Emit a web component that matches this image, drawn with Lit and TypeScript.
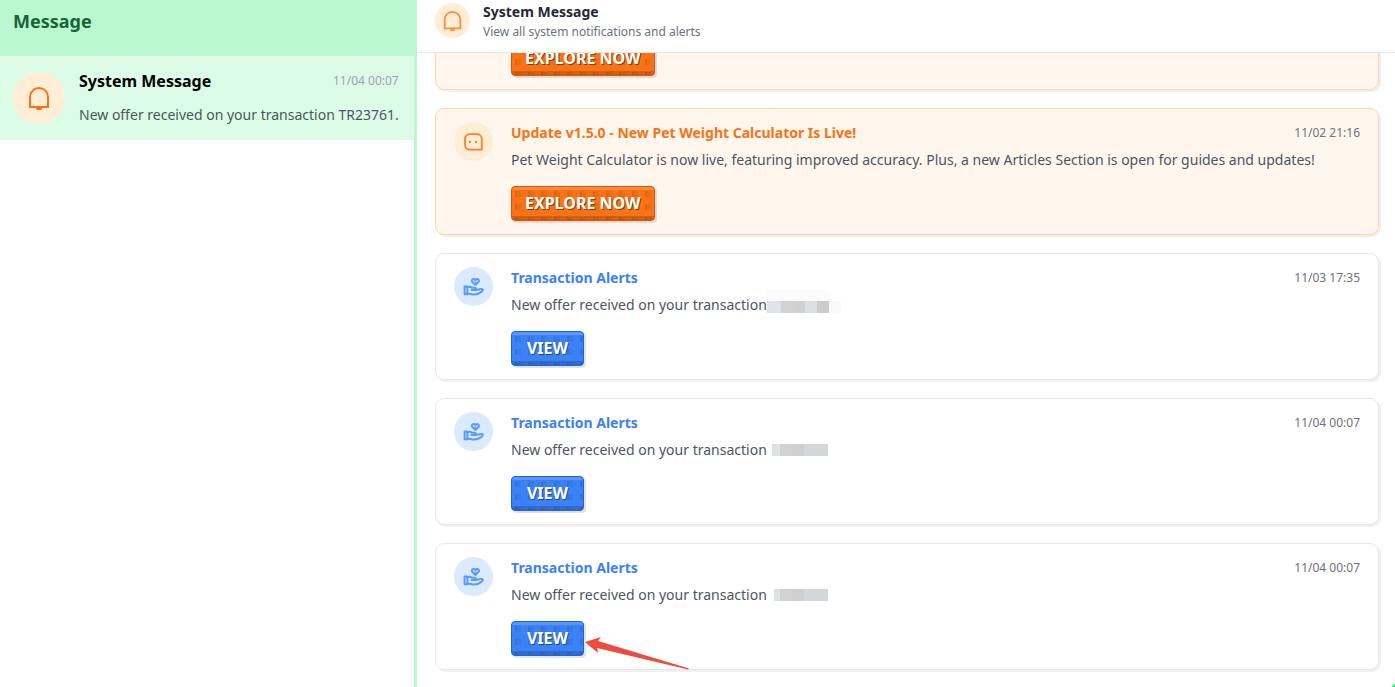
import { LitElement, html, css, svg, nothing } from "lit";
import { customElement, property } from "lit/decorators.js";

interface Notice {
  kind: "update" | "offer";
  title: string;
  text: string;
  time: string;
  action: string;
  mask?: "shaded" | "plain" | "short";
  arrow?: boolean;
}

const update: Notice = {
  kind: "update",
  title: "Update v1.5.0 - New Pet Weight Calculator Is Live!",
  text: "Pet Weight Calculator is now live, featuring improved accuracy. Plus, a new Articles Section is open for guides and updates!",
  time: "11/02 21:16",
  action: "EXPLORE NOW",
};

const offer = (time: string, mask: Notice["mask"], arrow = false): Notice => ({
  kind: "offer",
  title: "Transaction Alerts",
  text: "New offer received on your transaction",
  time,
  action: "VIEW",
  mask,
  arrow,
});

const notices: Notice[] = [
  update,
  update,
  offer("11/03 17:35", "shaded"),
  offer("11/04 00:07", "plain"),
  offer("11/04 00:07", "short", true),
];

const bell = (size: number) => html`<svg viewBox="0 0 24 24" width=${size} height=${size} aria-hidden="true">
  <path d="M3 21V11A9 9 0 0 1 21 11V21Z" fill="none" stroke="currentColor" stroke-width="2" stroke-linejoin="miter"/>
  <path d="M9 22H15A3 2.4 0 0 1 9 22Z" fill="currentColor"/>
</svg>`;

const bot = html`<svg viewBox="0 0 19 18" width="19" height="18" aria-hidden="true">
  <path d="M5.6 1.2H13.2A4.6 4.6 0 0 1 17.8 5.8V16.6H5.6A4.6 4.6 0 0 1 1 12V5.8A4.6 4.6 0 0 1 5.6 1.2Z" fill="none" stroke="currentColor" stroke-width="1.8"/>
  <path d="M5 8h2v2H5zM11 8h2v2h-2z" fill="currentColor"/>
</svg>`;

const hand = html`<svg viewBox="0 0 22 20" width="22" height="20" aria-hidden="true">
  <g fill="none" stroke="currentColor" stroke-width="2" stroke-linejoin="round" stroke-linecap="round">
    <path d="M1.6 9.4H4.4V17.2H1.6Z"/>
    <path d="M4.4 10.2C6 9.4 7.6 9.6 9 10.8H11.6C13.4 10.8 13.4 13 11.6 13H8.6M13 13L18 12C20.4 11.6 20.4 13.6 18.8 14.6C16.4 16.4 14 17.6 11 17.6C8.6 17.6 7.2 16.6 4.4 16.4"/>
    <path d="M12.4 8L9.2 4.8C7.8 2.8 10.6 .8 12.4 3C14.2 .8 17 2.8 15.6 4.8Z"/>
  </g>
  <path d="M12.4 6.4L11 4.6H13.8Z" fill="currentColor"/>
</svg>`;

@customElement("notice-card")
export class NoticeCard extends LitElement {
  @property({ attribute: false }) notice!: Notice;

  static styles = css`
    :host { display: block; flex: none; position: relative; }
    .card {
      display: flex; gap: 18px; padding: 13px 18px; box-sizing: border-box;
      border: 1px solid #e5e7eb; border-radius: 9px; background: #fff;
      box-shadow: 2px 2px 0 #f0f0f0;
    }
    .update { background: #fff7ed; border-color: #fed7aa; }
    .icon {
      flex: none; width: 39px; height: 39px; border-radius: 50%;
      display: grid; place-items: center; background: #dbeafe; color: #5a9bfa;
    }
    .update .icon { background: #ffedd5; color: #fb8226; }
    .body { flex: 1; min-width: 0; }
    .top { display: flex; justify-content: space-between; align-items: center; line-height: 22px; }
    h3 { margin: 0; font-size: 14px; font-weight: 700; color: #3b82f6; }
    .update h3 { color: #f97316; }
    time { font-size: 12px; color: #6b7280; }
    p { margin: 0 0 13px; padding-top: 3px; display: flex; font-size: 14px; line-height: 26px; color: #4b5563; }
    .mask { display: flex; align-self: center; height: 12px; margin-left: 5px; }
    .mask i { width: 12px; background: #d3d7da; }
    .mask i:nth-child(1) { width: 8px; background: #dde3e5; }
    .mask i:nth-child(2) { background: #d2d2d4; }
    .mask i:nth-child(3) { background: #cfcfd1; }
    .short { margin-left: 7px; }
    .short i:nth-child(1) { width: 6px; }
    .shaded { margin-left: 0; align-self: flex-end; margin-bottom: 5px; box-shadow: 0 -12px 0 #fbfbfb, 12px 0 0 #f8f9fc; }
    .shaded i:nth-child(1) { width: 14px; background: #e0e3e9; }
    .shaded i:nth-child(4) { background: #dbdfe3; }
    .shaded i:nth-child(5) { background: #cbcbcd; }
    button {
      display: block; height: 35px; min-width: 73px; padding: 0 13px; border: 1px solid #1d62e0; border-radius: 4px;
      color: #fff; font: 700 16px/33px "Noto Sans", sans-serif;
      text-shadow: 1px 1px 0 rgb(0 0 0 / 45%);
      background:
        linear-gradient(rgb(255 255 255 / 17%) 3px, transparent 3px, transparent 29px, rgb(0 0 0 / 16%) 29px),
        conic-gradient(from 270deg at 2px 6px, rgb(0 0 0 / 6%) 25%, transparent 0) 3px 4px / 13px 13px,
        conic-gradient(from 270deg at 6px 6px, rgb(0 0 0 / 6%) 25%, transparent 0) 3px 4px / 13px 13px,
        #3b82f6;
      box-shadow: 2px 2px 0 rgb(0 0 0 / 11%);
    }
    .update button { background-color: #f97316; border-color: #dc520c; }
    .arrow { position: absolute; left: 150px; top: 93px; }
  `;

  render() {
    const n = this.notice;
    return html`<article class="card ${n.kind}">
        <span class="icon">${n.kind === "update" ? bot : hand}</span>
        <div class="body">
          <div class="top"><h3>${n.title}</h3><time>${n.time}</time></div>
          <p>${n.text}${n.mask
            ? html`<span class="mask ${n.mask}"><i></i><i></i><i></i><i></i><i></i></span>`
            : nothing}</p>
          <button type="button">${n.action}</button>
        </div>
      </article>
      ${n.arrow
        ? html`<svg class="arrow" width="106" height="34" viewBox="0 0 106 34" aria-hidden="true">
            ${svg`<path d="M0 6L16 1L13 5L104 32.5L103 33.5L12 12L13 17Z" fill="#f04a3e"/>`}
          </svg>`
        : nothing}`;
  }
}

@customElement("app-root")
export class AppRoot extends LitElement {
  static styles = css`
    :host {
      display: flex; height: 100vh; overflow: hidden; position: relative;
      font-family: "Noto Sans", sans-serif; background: #fff;
    }
    .side { flex: none; width: 417px; box-sizing: border-box; border-right: 3px solid #bbf7d0; }
    h1 { margin: 0; height: 56px; padding: 5px 13px; box-sizing: border-box; background: #bbf7d0; color: #166534; font-size: 18px; line-height: 32px; }
    .thread { display: flex; gap: 14px; align-items: center; height: 84px; padding: 0 17px 0 13px; box-sizing: border-box; background: #dcfce7; color: #000; text-decoration: none; }
    .bell { flex: none; display: grid; place-items: center; width: 52px; height: 52px; border-radius: 50%; background: #ffedd5; color: #f97316; }
    .info { flex: 1; }
    .row { display: flex; justify-content: space-between; align-items: center; line-height: 34px; }
    .row strong { font-size: 16px; }
    time { font-size: 12px; color: #9ca3af; }
    .last { font-size: 14px; line-height: 34px; color: #4b5563; white-space: nowrap; }
    main { flex: 1; min-width: 0; display: flex; flex-direction: column; }
    header { flex: none; display: flex; gap: 13px; padding: 3px 18px 12px; height: 53px; box-sizing: border-box; border-bottom: 1px solid #e5e7eb; }
    header .bell { width: 35px; height: 35px; color: #fb8b3c; }
    h2 { margin: 0; font-size: 14px; line-height: 18px; color: #1f2937; }
    .sub { margin: 0; font-size: 12px; line-height: 22px; color: #6b7280; }
    .list { flex: 1; min-height: 0; overflow: hidden; display: flex; flex-direction: column; justify-content: flex-end; gap: 18px; padding: 0 16px 17px 18px; }
    .corner { position: absolute; right: 0; bottom: 0; }
  `;

  render() {
    return html`
      <aside class="side">
        <h1>Message</h1>
        <a class="thread" href="#system">
          <span class="bell">${bell(24)}</span>
          <div class="info">
            <div class="row"><strong>System Message</strong><time>11/04 00:07</time></div>
            <div class="last">New offer received on your transaction TR23761.</div>
          </div>
        </a>
      </aside>
      <main>
        <header>
          <span class="bell">${bell(21)}</span>
          <div><h2>System Message</h2><p class="sub">View all system notifications and alerts</p></div>
        </header>
        <section class="list">
          ${notices.map((n) => html`<notice-card .notice=${n}></notice-card>`)}
        </section>
      </main>
      <svg class="corner" width="3" height="3" viewBox="0 0 3 3" aria-hidden="true"><path d="M0 3V2L2 0H3V3Z" fill="#4ade80"/></svg>
    `;
  }
}
